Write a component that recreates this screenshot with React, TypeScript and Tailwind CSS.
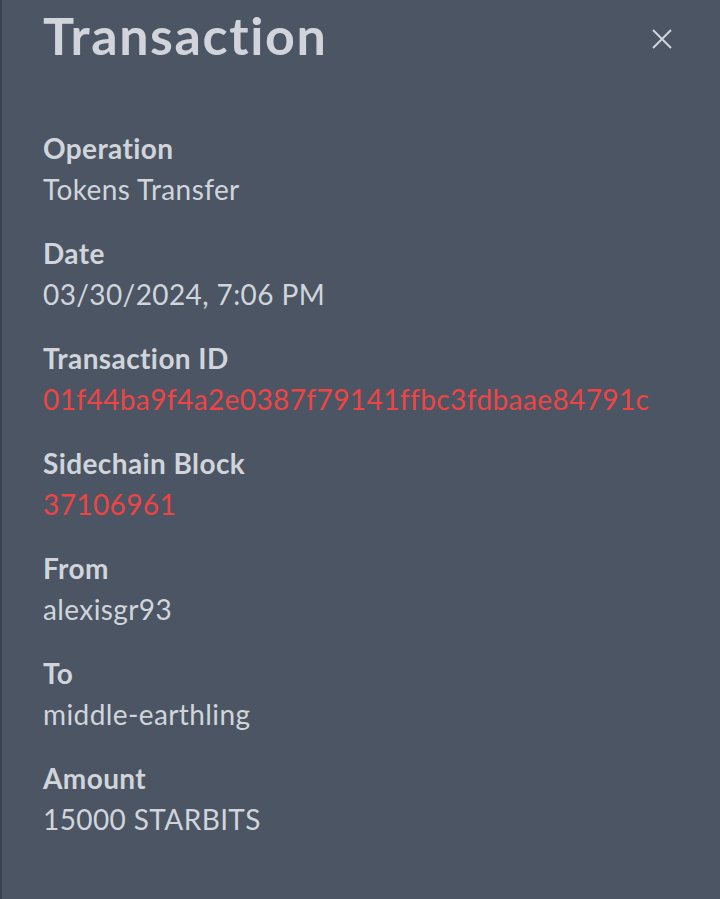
import React from 'react';

const rows: { label: string; value: string; link?: boolean }[] = [
  { label: 'Operation', value: 'Tokens Transfer' },
  { label: 'Date', value: '03/30/2024, 7:06 PM' },
  { label: 'Transaction ID', value: '01f44ba9f4a2e0387f79141ffbc3fdbaae84791c', link: true },
  { label: 'Sidechain Block', value: '37106961', link: true },
  { label: 'From', value: 'alexisgr93' },
  { label: 'To', value: 'middle-earthling' },
  { label: 'Amount', value: '15000 STARBITS' },
];

const App: React.FC = () => {
  return (
    <div
      className="min-h-[899px] w-[720px] bg-[#4b5563] border-l-2 border-[#374151] text-[#d1d5db]"
      style={{ fontFamily: 'Lato, "Noto Sans", sans-serif' }}
    >
      <div className="flex items-start justify-between pl-[41px] pr-[48px] pt-[9px]">
        <h2 className="text-[52px] leading-[52px] font-bold tracking-[1.6px]">Transaction</h2>
        <button className="mt-[20px] text-[#d1d5db]">
          <svg width="20" height="20" viewBox="0 0 20 20" fill="none" stroke="currentColor" strokeWidth="2">
            <path d="M1 1 L19 19 M19 1 L1 19" />
          </svg>
        </button>
      </div>

      <div className="pl-[41px] pt-[67px]">
        {rows.map((r) => (
          <div key={r.label} className="mb-[23px]">
            <p className="text-[28px] leading-[40px] font-bold tracking-[0.4px]">{r.label}</p>
            <p className={`text-[28px] leading-[42px] tracking-[0.4px] ${r.link ? 'text-[#ef4444]' : ''}`}>{r.value}</p>
          </div>
        ))}
      </div>
    </div>
  );
};

export default App;
